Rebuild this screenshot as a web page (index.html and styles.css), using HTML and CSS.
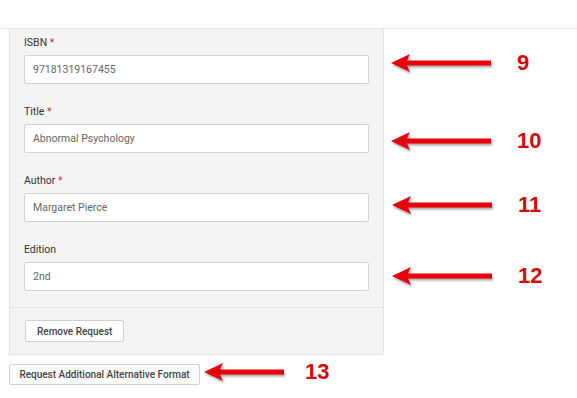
FILE: index.html
```html
<!doctype html>
<html lang="en">
<head>
  <meta charset="utf-8">
  <title>Alternative Format Request</title>
  <link rel="stylesheet" href="styles.css">
</head>
<body>

<div class="topbar"></div>

<div class="page">
  <div class="request">
    <div class="fields">
      <label class="field">
        <span class="field-label">ISBN <em>*</em></span>
        <input type="text" value="97181319167455">
      </label>
      <label class="field">
        <span class="field-label">Title <em>*</em></span>
        <input type="text" value="Abnormal Psychology">
      </label>
      <label class="field">
        <span class="field-label">Author <em>*</em></span>
        <input type="text" value="Margaret Pierce">
      </label>
      <label class="field">
        <span class="field-label">Edition</span>
        <input type="text" value="2nd">
      </label>
    </div>
    <div class="request-footer">
      <button type="button" class="btn">Remove Request</button>
    </div>
  </div>

  <button type="button" class="btn btn-add">Request Additional Alternative Format</button>

  <!-- callout annotations -->
  <div class="note note-9">
    <svg class="arrow" width="100" height="20" viewBox="0 0 100 20"><polygon points="0,10 19,1 16,7.5 100,7.5 100,12.5 16,12.5 19,19"/></svg>
    <span>9</span>
  </div>
  <div class="note note-10">
    <svg class="arrow" width="100" height="20" viewBox="0 0 100 20"><polygon points="0,10 19,1 16,7.5 100,7.5 100,12.5 16,12.5 19,19"/></svg>
    <span>10</span>
  </div>
  <div class="note note-11">
    <svg class="arrow" width="100" height="20" viewBox="0 0 100 20"><polygon points="0,10 19,1 16,7.5 100,7.5 100,12.5 16,12.5 19,19"/></svg>
    <span>11</span>
  </div>
  <div class="note note-12">
    <svg class="arrow" width="100" height="20" viewBox="0 0 100 20"><polygon points="0,10 19,1 16,7.5 100,7.5 100,12.5 16,12.5 19,19"/></svg>
    <span>12</span>
  </div>
  <div class="note note-13">
    <svg class="arrow" width="80" height="20" viewBox="0 0 80 20"><polygon points="0,10 19,1 16,7.5 80,7.5 80,12.5 16,12.5 19,19"/></svg>
    <span>13</span>
  </div>
</div>

</body>
</html>
```

FILE: styles.css
```css
:root {
  --panel-bg: #f4f4f4;
  --panel-border: #e4e4e4;
  --input-border: #d2d2d2;
  --text-color: #333;
  --muted-text: #666;
  --required: #c0392b;
  --callout: #e8000b;
  --callout-text: #d40a0a;
}
html {
  font-family: Roboto, "Noto Sans", Arial, sans-serif;
  font-size: 11px;
  color: var(--text-color);
}
body {
  margin: 0;
  background: #fff;
}
*, *:before, *:after {
  box-sizing: border-box;
}
.topbar {
  height: 29px;
  border-bottom: 1px solid #e6e6e6;
}
.page {
  position: relative;
  padding-left: 9px;
}
.request {
  width: 375px;
  background: var(--panel-bg);
  border: 1px solid var(--panel-border);
  border-top: none;
}
.fields {
  display: flex;
  flex-direction: column;
  gap: 21px;
  padding: 7px 14px 16px;
}
.field {
  display: flex;
  flex-direction: column;
  gap: 5px;
}
.field-label {
  font-size: 10.5px;
  line-height: 14px;
}
.field-label em {
  font-style: normal;
  color: var(--required);
}
.field input {
  height: 29px;
  width: 100%;
  padding: 0 8px;
  border: 1px solid var(--input-border);
  border-radius: 2px;
  background: #fff;
  font-family: inherit;
  font-size: 10.5px;
  color: var(--muted-text);
  outline: none;
}
.request-footer {
  border-top: 1px solid var(--panel-border);
  padding: 12px 15px;
}
.btn {
  height: 22px;
  padding: 0 11px;
  border: 1px solid #cfcfcf;
  border-radius: 2px;
  background: #fdfdfd;
  font-family: inherit;
  font-size: 10px;
  font-weight: 500;
  color: #444;
  cursor: pointer;
}
.btn-add {
  margin-top: 9px;
  height: 21px;
  width: 191px;
  padding: 0;
}
.note {
  position: absolute;
  display: flex;
  align-items: center;
  gap: 26px;
  font-family: "Liberation Sans", Arial, sans-serif;
  font-weight: bold;
  font-size: 22px;
  line-height: 22px;
  color: var(--callout-text);
}
.arrow {
  display: block;
  fill: var(--callout);
  filter: drop-shadow(1px 2px 1px rgba(0, 0, 0, .35));
}
.note-9 { left: 391px; top: 23px; }
.note-10 { left: 391px; top: 101px; }
.note-11 { left: 392px; top: 165px; }
.note-12 { left: 392px; top: 236px; }
.note-13 { left: 204px; top: 332px; gap: 21px; }
```
